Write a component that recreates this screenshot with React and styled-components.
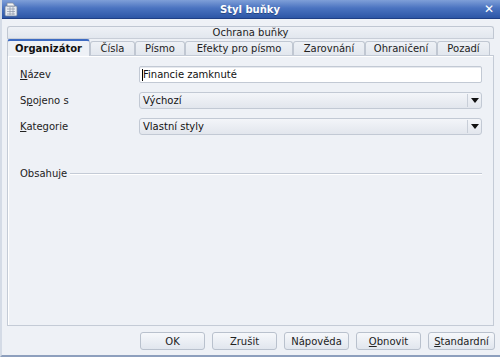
import React from "react";
import styled, { createGlobalStyle, css } from "styled-components";

const Global = createGlobalStyle`
  html, body { margin: 0; padding: 0; background: #eef1f6; }
  body { font-family: "DejaVu Sans", "Liberation Sans", sans-serif; font-size: 10px; color: #1a1a1a; }
  * { box-sizing: border-box; }
`;

const Window = styled.div`
  width: 500px;
  height: 357px;
  display: flex;
  flex-direction: column;
  background: #eef1f6;
  border-left: 2px solid #d4dbe6;
  border-bottom: 2px solid #8d9fbd;
  overflow: hidden;
`;

const TitleBar = styled.div`
  height: 19px;
  margin-left: -2px;
  display: flex;
  align-items: center;
  justify-content: space-between;
  padding: 0 6px 0 4px;
  background: linear-gradient(#7f9fd8 0%, #4a73c0 45%, #2d56a6 100%);
  border-bottom: 1px solid #1f3f85;
  color: #fff;
  position: relative;
`;

const Title = styled.div`
  position: absolute;
  left: 0;
  right: 0;
  text-align: center;
  font-weight: bold;
  font-size: 10px;
  text-shadow: 0 1px 0 rgba(0,0,0,0.3);
  pointer-events: none;
`;

const Close = styled.div`
  font-weight: bold;
  font-size: 12px;
  line-height: 1;
`;

const Body = styled.div`
  flex: 1;
  display: flex;
  flex-direction: column;
  padding: 7px 6px 0 5px;
`;

const TabRow = styled.div`
  display: flex;
  align-items: flex-end;
  height: ${p => p.$h}px;
`;

const Tab = styled.div`
  flex: ${p => (p.$grow ? 1 : "none")};
  width: ${p => (p.$w ? p.$w + "px" : "auto")};
  height: ${p => (p.$active ? "16px" : "14px")};
  display: flex;
  align-items: center;
  justify-content: center;
  border: 1px solid #c0c7d2;
  border-bottom: none;
  border-radius: 3px 3px 0 0;
  background: linear-gradient(#eef1f6, #e2e7ee);
  color: #222;
  white-space: nowrap;
  ${p =>
    p.$active &&
    css`
      background: #eef1f6;
      border-top: 2px solid #3d6bc2;
      font-weight: bold;
      color: #111;
      position: relative;
      z-index: 1;
      margin-bottom: -1px;
      height: 17px;
    `}
`;

const UpperTab = styled(Tab)`
  height: 13px;
  border-bottom: 1px solid #c8ced8;
`;

const Panel = styled.div`
  height: 271px;
  border: 1px solid #c4cbd6;
  box-shadow: inset 1px 1px 0 #ffffff;
  background: #eef1f6;
  display: flex;
  flex-direction: column;
  padding: 10px 11px 0 12px;
`;

const FormGrid = styled.div`
  display: grid;
  grid-template-columns: 119px 1fr;
  row-gap: 9px;
  align-items: center;
`;

const Label = styled.div`
  color: #222;
`;

const U = styled.span`
  text-decoration: underline;
  text-underline-offset: 1px;
`;

const Input = styled.div`
  height: 17px;
  background: #fff;
  border: 1px solid #c2c9d4;
  border-radius: 2px;
  display: flex;
  align-items: center;
  padding-left: 2px;
  color: #111;
  box-shadow: inset 0 1px 0 #e6e9ee;
`;

const Caret = styled.span`
  display: inline-block;
  width: 1px;
  height: 12px;
  background: #000;
`;

const Combo = styled.div`
  height: 17px;
  border: 1px solid #c2c9d4;
  border-radius: 3px;
  background: linear-gradient(#f3f5f9, #e2e6ed);
  display: flex;
  align-items: center;
  color: #111;
`;

const ComboText = styled.div`
  flex: 1;
  padding-left: 3px;
`;

const ComboArrow = styled.div`
  width: 14px;
  height: 13px;
  border-left: 1px solid #c8ced8;
  display: flex;
  align-items: center;
  justify-content: center;
`;

const Group = styled.div`
  margin-top: 33px;
  display: flex;
  align-items: center;
  gap: 3px;
`;

const GroupLine = styled.div`
  flex: 1;
  height: 2px;
  border-top: 1px solid #c4cbd6;
  border-bottom: 1px solid #ffffff;
`;

const ButtonBar = styled.div`
  display: flex;
  justify-content: flex-end;
  gap: 7px;
  margin-top: 6px;
  margin-right: -1px;
`;

const Button = styled.div`
  width: ${p => p.$w || 65}px;
  height: 18px;
  border: 1px solid #b9c1cd;
  border-radius: 3px;
  background: linear-gradient(#f6f8fb, #e1e6ee);
  display: flex;
  align-items: center;
  justify-content: center;
  color: #222;
`;

const Arrow = () => (
  <svg width="8" height="5" viewBox="0 0 8 5">
    <path d="M0 0H8L4 5Z" fill="#111" />
  </svg>
);

const WinIcon = () => (
  <svg width="14" height="15" viewBox="0 0 14 15">
    <rect x="1" y="4" width="12" height="10" rx="1" fill="#e8ecf2" stroke="#6d7f99" strokeWidth="0.8" />
    <path d="M3 1h6l2 3H3z" fill="#f6f6f6" stroke="#7d8aa0" strokeWidth="0.8" />
    <path d="M3 7h8M3 9.5h8M3 12h8M6 5v8M9 5v8" stroke="#8894a8" strokeWidth="0.7" />
  </svg>
);

const tabs = [
  { t: "Organizátor", w: 83, active: true },
  { t: "Čísla", w: 45 },
  { t: "Písmo", w: 50 },
  { t: "Efekty pro písmo", w: 108 },
  { t: "Zarovnání", w: 72 },
  { t: "Ohraničení", w: 72 },
  { t: "Pozadí", w: 53 },
];

export default function App() {
  return (
    <>
      <Global />
      <Window>
        <TitleBar>
          <WinIcon />
          <Title>Styl buňky</Title>
          <Close>✕</Close>
        </TitleBar>
        <Body>
          <TabRow $h={13}>
            <UpperTab $grow>Ochrana buňky</UpperTab>
          </TabRow>
          <TabRow $h={16}>
            {tabs.map(tab => (
              <Tab key={tab.t} $w={tab.w} $active={tab.active}>
                {tab.t}
              </Tab>
            ))}
          </TabRow>
          <Panel>
            <FormGrid>
              <Label><U>N</U>ázev</Label>
              <Input><Caret />Financie zamknuté</Input>
              <Label>S<U>p</U>ojeno s</Label>
              <Combo>
                <ComboText>Výchozí</ComboText>
                <ComboArrow><Arrow /></ComboArrow>
              </Combo>
              <Label><U>K</U>ategorie</Label>
              <Combo>
                <ComboText>Vlastní styly</ComboText>
                <ComboArrow><Arrow /></ComboArrow>
              </Combo>
            </FormGrid>
            <Group>
              <Label>Obsahuje</Label>
              <GroupLine />
            </Group>
          </Panel>
          <ButtonBar>
            <Button>OK</Button>
            <Button>Zrušit</Button>
            <Button>Nápověda</Button>
            <Button><U>O</U>bnovit</Button>
            <Button $w={67}><U>S</U>tandardní</Button>
          </ButtonBar>
        </Body>
      </Window>
    </>
  );
}
